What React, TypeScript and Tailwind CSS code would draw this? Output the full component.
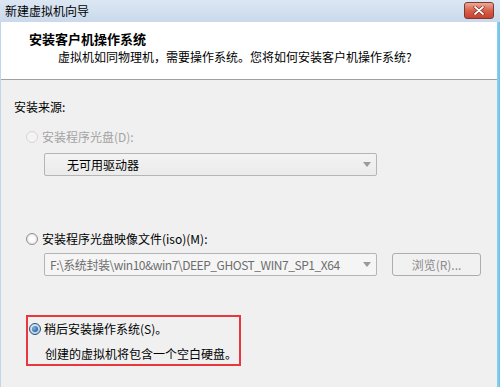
import type { ReactNode } from 'react';

const FONT = { fontFamily: '"Microsoft YaHei", "Noto Sans CJK SC", sans-serif' };

function Radio({ state }: { state: 'disabled' | 'off' | 'on' }) {
  if (state === 'on') {
    return (
      <span className="w-[12px] h-[12px] rounded-full border border-[#2c4f74] bg-[radial-gradient(circle_at_40%_35%,#e6f2fb,#9fc2df)] flex items-center justify-center shrink-0">
        <span className="w-[6px] h-[6px] rounded-full bg-[radial-gradient(circle_at_35%_35%,#7fb3e0,#0d4a8c)]" />
      </span>
    );
  }
  return (
    <span
      className={`w-[12px] h-[12px] rounded-full border shrink-0 ${
        state === 'disabled'
          ? 'border-[#d6d6d6] bg-[#f4f4f4]'
          : 'border-[#8f8f8f] bg-[radial-gradient(circle_at_50%_50%,#ffffff_25%,#dcdcdc)]'
      }`}
    />
  );
}

function Combo({ children, muted, width }: { children: ReactNode; muted?: boolean; width: string }) {
  return (
    <div
      className={`${width} h-[23px] flex items-center border border-[#b5b5b5] rounded-[2px] ${
        muted ? 'bg-[#f5f5f5] text-[#6d6d6d]' : 'bg-[linear-gradient(#f3f3f3,#ebebeb)] text-black'
      }`}
    >
      <span
        className={`flex-1 overflow-hidden whitespace-nowrap text-[12px] ${
          muted ? 'pl-[5px] tracking-[-0.45px]' : 'pl-[22px]'
        }`}
      >
        {children}
      </span>
      <svg width="8" height="5" viewBox="0 0 8 5" className="mr-[5px] ml-[4px] shrink-0">
        <path d="M0 0h8L4 5z" fill="#9a9a9a" />
      </svg>
    </div>
  );
}

export default function App() {
  return (
    <div className="w-[500px] h-[387px] flex flex-col bg-[#f0f0f0] overflow-hidden" style={FONT}>
      {/* title bar */}
      <div className="h-[22px] shrink-0 flex items-center justify-between bg-[linear-gradient(#dce7f3,#c9d9eb)] pl-[5px] pr-[6px]">
        <span className="text-[12px] text-black leading-none">新建虚拟机向导</span>
        <div className="w-[30px] h-[17px] mt-[-2px] rounded-[3px] border border-[#7a3a33] bg-[linear-gradient(#eca897,#d9604a_50%,#c8402e)] flex items-center justify-center">
          <svg width="12" height="9" viewBox="0 0 12 9">
            <path d="M2 1l8 7M10 1L2 8" stroke="#6a1e14" strokeWidth="3" strokeLinecap="round" />
            <path d="M2 1l8 7M10 1L2 8" stroke="#ffffff" strokeWidth="1.8" strokeLinecap="round" />
          </svg>
        </div>
      </div>

      <div className="flex-1 flex border-l border-[#c3d5e8]">
        <div className="flex-1 flex flex-col">
          {/* header */}
          <div className="h-[58px] shrink-0 bg-white border-b border-[#a0a0a0] pt-[8px]">
            <div className="pl-[28px] text-[13px] font-bold text-black leading-[17px]">安装客户机操作系统</div>
            <div className="pl-[57px] mt-[1px] text-[12px] text-black leading-[17px]">
              虚拟机如同物理机，需要操作系统。您将如何安装客户机操作系统?
            </div>
          </div>

          {/* body */}
          <div className="flex-1 pl-[13px] pt-[18px] text-[12px] leading-[17px] text-black">
            <div>安装来源:</div>

            <div className="mt-[13px] ml-[12px] flex items-center gap-[4px] text-[#a3a3a3]">
              <Radio state="disabled" />
              <span>安装程序光盘(D):</span>
            </div>
            <div className="mt-[8px] ml-[30px]">
              <Combo width="w-[333px]">无可用驱动器</Combo>
            </div>

            <div className="mt-[54px] ml-[12px] flex items-center gap-[4px]">
              <Radio state="off" />
              <span>安装程序光盘映像文件(iso)(M):</span>
            </div>
            <div className="mt-[6px] ml-[30px] flex items-center gap-[15px]">
              <Combo width="w-[333px]" muted>
                F:\系统封装\win10&amp;win7\DEEP_GHOST_WIN7_SP1_X64
              </Combo>
              <div className="w-[89px] h-[23px] border border-[#adadad] rounded-[3px] bg-[#f1f1f1] text-[#8a8a8a] flex items-center justify-center">
                浏览(R)...
              </div>
            </div>

            <div className="mt-[39px] ml-[12px] w-[215px] h-[51px] border-2 border-[#e8383d] pl-[1px] pt-[3px]">
              <div className="flex items-center gap-[3px]">
                <Radio state="on" />
                <span>稍后安装操作系统(S)。</span>
              </div>
              <div className="mt-[8px] pl-[16px]">创建的虚拟机将包含一个空白硬盘。</div>
            </div>
          </div>
        </div>
        <div className="w-[3px] bg-[linear-gradient(90deg,#8ed0ee,#6fc0e6)]" />
      </div>
    </div>
  );
}
